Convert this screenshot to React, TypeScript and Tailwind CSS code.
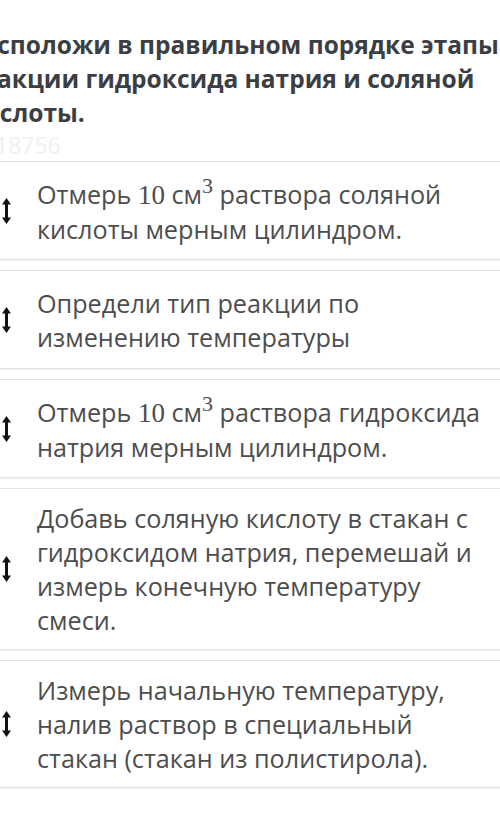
import type { ReactNode } from "react";

interface Step {
  id: number;
  body: ReactNode;
}

const Ten = () => (
  <>
    <span className="font-['Liberation_Serif',serif] text-[27px]">10</span> см
    <span className="align-[11px] font-['Liberation_Serif',serif] text-[22px] leading-none">3</span>
  </>
);

const steps: Step[] = [
  {
    id: 1,
    body: (
      <>
        Отмерь <Ten /> раствора соляной кислоты мерным цилиндром.
      </>
    ),
  },
  { id: 2, body: "Определи тип реакции по изменению температуры" },
  {
    id: 3,
    body: (
      <>
        Отмерь <Ten /> раствора гидроксида натрия мерным цилиндром.
      </>
    ),
  },
  {
    id: 4,
    body: "Добавь соляную кислоту в стакан с гидроксидом натрия, перемешай и измерь конечную температуру смеси.",
  },
  {
    id: 5,
    body: "Измерь начальную температуру, налив раствор в специальный стакан (стакан из полистирола).",
  },
];

function DragArrow() {
  return (
    <svg width="9" height="26" viewBox="0 0 9 26" className="shrink-0 text-[#111]" aria-hidden>
      <path d="M4.5 0 L9 6.5 L0 6.5 Z M4.5 26 L9 19.5 L0 19.5 Z" fill="currentColor" />
      <rect x="3" y="5" width="3" height="16" fill="currentColor" />
    </svg>
  );
}

export default function App() {
  return (
    <div className="h-[822px] w-[500px] overflow-hidden bg-white font-['Open_Sans',sans-serif]">
      <div className="-ml-[33px] pt-[28px]">
        <h1 className="w-[567px] text-[24.5px] font-bold leading-[34px] text-[#3b3e43]">
          Расположи в правильном порядке этапы реакции гидроксида натрия и соляной кислоты.
        </h1>
        <div className="ml-[28px] text-[23px] leading-[30px] text-[#f0f0f0]">18756</div>
      </div>

      <div className="mt-[1px] flex flex-col gap-[10px]">
        {steps.map((step) => (
          <div
            key={step.id}
            className="flex min-h-[99px] items-center border-y border-[#e2e2e2] bg-white py-[12px] pl-[2px] pr-[10px] shadow-[0_1px_1px_rgba(0,0,0,0.06)]"
          >
            <DragArrow />
            <p className="ml-[26px] text-[25.2px] leading-[34px] text-[#4d4d4d]">{step.body}</p>
          </div>
        ))}
      </div>
    </div>
  );
}
